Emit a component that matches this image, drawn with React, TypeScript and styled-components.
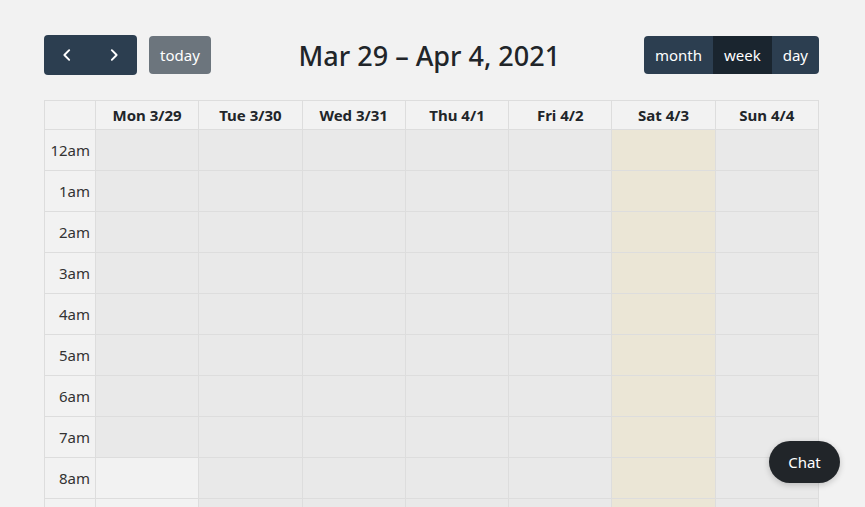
import { Fragment } from 'react'
import styled, { createGlobalStyle } from 'styled-components'

const GlobalStyle = createGlobalStyle`
	html, body {
		margin: 0;
		padding: 0;
		background: #f2f2f2;
		font-family: 'Noto Sans', 'Open Sans', sans-serif;
		color: #212529;
		overflow: hidden;
	}
`

const Page = styled.div`
	padding: 35px 46px 0 44px;
	height: 507px;
	box-sizing: border-box;
	overflow: hidden;
	position: relative;
`

const Toolbar = styled.div`
	display: flex;
	align-items: center;
	justify-content: space-between;
	height: 40px;
	margin-bottom: 25px;
`

const ToolbarChunk = styled.div`
	display: flex;
	align-items: center;
	gap: 12px;
	flex-shrink: 0;
`

const ButtonGroup = styled.div`
	display: flex;
	border-radius: 4px;
	overflow: hidden;
	flex-shrink: 0;
`

const Button = styled.button<{ active?: boolean; tall?: boolean }>`
	border: none;
	margin: 0;
	height: ${props => (props.tall ? '40px' : '38px')};
	padding: 0 11px;
	background: ${props => (props.active ? '#1a252f' : '#2c3e50')};
	color: #fff;
	font-family: inherit;
	font-size: 15px;
	display: flex;
	align-items: center;
	justify-content: center;
	flex-shrink: 0;
	cursor: pointer;
`

const NavButton = styled(Button)`
	width: 46.5px;
	padding: 0;
`

const TodayButton = styled(Button)`
	background: #6c757d;
	border-radius: 4px;
	padding: 0 11px;
`

const Title = styled.h2`
	margin: 0 0 0 4px;
	font-size: 27px;
	font-weight: 500;
	color: #212529;
	white-space: nowrap;
`

const Grid = styled.div`
	display: grid;
	grid-template-columns: 51px repeat(7, 1fr);
	grid-template-rows: 29px;
	grid-auto-rows: 41px;
	border-top: 1px solid #dddddd;
	border-left: 1px solid #dddddd;
`

const HeadCell = styled.div`
	border-right: 1px solid #dddddd;
	border-bottom: 1px solid #dddddd;
	font-size: 15px;
	font-weight: 700;
	display: flex;
	align-items: center;
	justify-content: center;
	color: #212529;
`

const TimeCell = styled.div`
	border-right: 1px solid #dddddd;
	border-bottom: 1px solid #dddddd;
	font-size: 15px;
	display: flex;
	align-items: center;
	justify-content: flex-end;
	padding-right: 5px;
	color: #333;
	background: #f2f2f2;
`

const SlotCell = styled.div<{ tone: 'off' | 'open' | 'today' }>`
	border-right: 1px solid #dddddd;
	border-bottom: 1px solid #dddddd;
	background: ${props =>
		props.tone === 'today' ? '#ebe6d6' : props.tone === 'open' ? '#f2f2f2' : '#e9e9e9'};
`

const ChatButton = styled.button`
	position: absolute;
	left: 769px;
	top: 441px;
	width: 71px;
	height: 42px;
	border: none;
	border-radius: 21px;
	background: #212529;
	color: #fff;
	font-family: inherit;
	font-size: 15px;
	box-shadow: 0 2px 6px rgba(0, 0, 0, 0.2);
	cursor: pointer;
`

const Chevron = ({ dir }: { dir: 'left' | 'right' }) => (
	<svg width="14" height="14" viewBox="0 0 16 16" fill="none">
		<path
			d={dir === 'left' ? 'M10.5 2.5 5 8l5.5 5.5' : 'M5.5 2.5 11 8l-5.5 5.5'}
			stroke="#fff"
			strokeWidth="2.2"
			strokeLinecap="round"
			strokeLinejoin="round"
		/>
	</svg>
)

const days = ['Mon 3/29', 'Tue 3/30', 'Wed 3/31', 'Thu 4/1', 'Fri 4/2', 'Sat 4/3', 'Sun 4/4']
const hours = ['12am', '1am', '2am', '3am', '4am', '5am', '6am', '7am', '8am', '9am']

export default function App() {
	return (
		<>
			<GlobalStyle />
			<Page>
				<Toolbar>
					<ToolbarChunk>
						<ButtonGroup>
							<NavButton tall>
								<Chevron dir="left" />
							</NavButton>
							<NavButton tall>
								<Chevron dir="right" />
							</NavButton>
						</ButtonGroup>
						<TodayButton>today</TodayButton>
					</ToolbarChunk>
					<Title>Mar 29 – Apr 4, 2021</Title>
					<ToolbarChunk>
						<ButtonGroup>
							<Button>month</Button>
							<Button active>week</Button>
							<Button>day</Button>
						</ButtonGroup>
					</ToolbarChunk>
				</Toolbar>
				<Grid>
					<HeadCell />
					{days.map(d => (
						<HeadCell key={d}>{d}</HeadCell>
					))}
					{hours.map((h, hi) => (
						<Fragment key={h}>
							<TimeCell>{h}</TimeCell>
							{days.map((d, di) => (
								<SlotCell
									key={d}
									tone={di === 5 ? 'today' : di === 0 && hi >= 8 ? 'open' : 'off'}
								/>
							))}
						</Fragment>
					))}
				</Grid>
				<ChatButton>Chat</ChatButton>
			</Page>
		</>
	)
}
